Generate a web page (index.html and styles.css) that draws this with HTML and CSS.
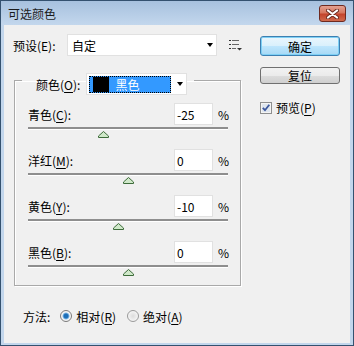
FILE: index.html
```html
<!DOCTYPE html>
<html>
<head>
<meta charset="utf-8">
<title>可选颜色</title>
<link rel="stylesheet" href="styles.css">
</head>
<body>
<div class="window">
    <div class="titlebar">
        <span class="title">可选颜色</span>
        <span class="close-btn">
            <svg width="13" height="10" viewBox="0 0 13 10">
                <path d="M2 1.5 L11 8.5 M11 1.5 L2 8.5" stroke="#6b2a20" stroke-width="4" stroke-linecap="round"/>
                <path d="M2 1.5 L11 8.5 M11 1.5 L2 8.5" stroke="#fff" stroke-width="2.2" stroke-linecap="round"/>
            </svg>
        </span>
    </div>
    <div class="client">
        <div class="main">
            <div class="preset-row">
                <span class="preset-label">预设(E):</span>
                <div class="select preset-select">
                    <span>自定</span>
                    <span class="arrow"></span>
                </div>
                <svg class="menu-icon" width="13" height="11" viewBox="0 0 13 11">
                    <rect x="0" y="0" width="2" height="1" fill="#333"/>
                    <rect x="3" y="0" width="7" height="1" fill="#666"/>
                    <rect x="0" y="4" width="2" height="1" fill="#333"/>
                    <rect x="3" y="4" width="7" height="1" fill="#666"/>
                    <rect x="0" y="8" width="2" height="1" fill="#333"/>
                    <rect x="3" y="8" width="4" height="1" fill="#666"/>
                    <path d="M8 8 L13 8 L10.5 10.5 Z" fill="#333"/>
                </svg>
            </div>

            <fieldset class="group">
                <legend class="group-legend">
                    <span>颜色(<u>O</u>):</span>
                    <div class="select color-select">
                        <span class="color-item"><span class="swatch"></span>黑色</span>
                        <span class="arrow"></span>
                    </div>
                </legend>

                <div class="slider-row">
                    <div class="field-row">
                        <span class="field-label">青色(<u>C</u>):</span>
                        <span class="num-input">-25</span>
                        <span class="unit">%</span>
                    </div>
                    <div class="slider">
                        <div class="track"></div>
                        <svg class="thumb" style="left: 70px" width="11" height="7" viewBox="0 0 11 7"><path d="M5.5 0.5 L10.5 5 L10.5 6.5 L0.5 6.5 L0.5 5 Z" fill="#cfe8c9" stroke="#3d6b3a"/></svg>
                    </div>
                </div>

                <div class="slider-row">
                    <div class="field-row">
                        <span class="field-label">洋红(<u>M</u>):</span>
                        <span class="num-input">0</span>
                        <span class="unit">%</span>
                    </div>
                    <div class="slider">
                        <div class="track"></div>
                        <svg class="thumb" style="left: 95px" width="11" height="7" viewBox="0 0 11 7"><path d="M5.5 0.5 L10.5 5 L10.5 6.5 L0.5 6.5 L0.5 5 Z" fill="#cfe8c9" stroke="#3d6b3a"/></svg>
                    </div>
                </div>

                <div class="slider-row">
                    <div class="field-row">
                        <span class="field-label">黄色(<u>Y</u>):</span>
                        <span class="num-input">-10</span>
                        <span class="unit">%</span>
                    </div>
                    <div class="slider">
                        <div class="track"></div>
                        <svg class="thumb" style="left: 85px" width="11" height="7" viewBox="0 0 11 7"><path d="M5.5 0.5 L10.5 5 L10.5 6.5 L0.5 6.5 L0.5 5 Z" fill="#cfe8c9" stroke="#3d6b3a"/></svg>
                    </div>
                </div>

                <div class="slider-row">
                    <div class="field-row">
                        <span class="field-label">黑色(<u>B</u>):</span>
                        <span class="num-input">0</span>
                        <span class="unit">%</span>
                    </div>
                    <div class="slider">
                        <div class="track"></div>
                        <svg class="thumb" style="left: 95px" width="11" height="7" viewBox="0 0 11 7"><path d="M5.5 0.5 L10.5 5 L10.5 6.5 L0.5 6.5 L0.5 5 Z" fill="#cfe8c9" stroke="#3d6b3a"/></svg>
                    </div>
                </div>
            </fieldset>

            <div class="method-row">
                <span class="method-label">方法:</span>
                <span class="radio checked"></span>
                <span class="radio-text">相对(<u>R</u>)</span>
                <span class="radio"></span>
                <span class="radio-text">绝对(<u>A</u>)</span>
            </div>
        </div>

        <div class="side">
            <div class="btn btn-default">确定</div>
            <div class="btn">复位</div>
            <div class="check-row">
                <svg class="checkbox" width="12" height="12" viewBox="0 0 12 12">
                    <rect x="0.5" y="0.5" width="11" height="11" fill="#f4f4f4" stroke="#8e8f8f"/>
                    <rect x="2" y="2" width="8" height="8" fill="#dfe6ee"/>
                    <path d="M2.8 5.8 L5 8.2 L9.3 2.8" fill="none" stroke="#3b579d" stroke-width="1.8"/>
                </svg>
                <span>预览(<u>P</u>)</span>
            </div>
        </div>
    </div>
</div>
</body>
</html>
```

FILE: styles.css
```css
* {
    box-sizing: border-box;
}

body {
    margin: 0;
    font-family: "Noto Sans CJK SC", "Liberation Sans", sans-serif;
    font-size: 12px;
    color: #000;
}

u {
    text-decoration: underline;
    text-underline-offset: 2px;
}

.window {
    width: 354px;
    height: 346px;
    border: 1px solid #34516f;
    background-color: #c2d6ec;
    display: flex;
    flex-direction: column;
}

.titlebar {
    height: 24px;
    display: flex;
    align-items: center;
    justify-content: space-between;
    padding: 0 7px 0 7px;
    background: linear-gradient(#a7c1de, #c3d7ed);
}

.title {
    font-size: 12px;
    color: #1b1b1b;
}

.close-btn {
    width: 27px;
    height: 17px;
    margin-top: 1px;
    border: 1px solid #6e2a20;
    border-radius: 3px;
    background: linear-gradient(#e3a192 0%, #d6775f 45%, #c4442c 55%, #cf6a4d 100%);
    display: flex;
    align-items: center;
    justify-content: center;
}

.client {
    flex: 1;
    margin: 0 3px 2px 3px;
    background-color: #f0f0f0;
    display: flex;
    padding: 9px 0 0 9px;
}

.main {
    width: 237px;
}

.preset-row {
    display: flex;
    align-items: center;
    height: 22px;
}

.preset-label {
    width: 54px;
}

.select {
    height: 22px;
    background-color: #fff;
    border: 1px solid #e1e1e1;
    display: flex;
    align-items: center;
    justify-content: space-between;
}

.preset-select {
    width: 150px;
    padding: 0 3px 0 4px;
}

.arrow {
    width: 0;
    height: 0;
    border-left: 3.5px solid transparent;
    border-right: 3.5px solid transparent;
    border-top: 4px solid #000;
}

.menu-icon {
    margin-left: 12px;
}

.group {
    margin: 9px 0 0 1px;
    width: 227px;
    padding: 0 12px 9px 13px;
    border: 1px solid #a9a9a9;
    box-shadow: 1px 1px 0 #fff, inset 1px 1px 0 #fff;
    min-width: 0;
}

.group-legend {
    display: flex;
    align-items: center;
    gap: 6px;
    margin-left: -6px;
    padding: 8px 7px 0 14px;
}

.color-select {
    width: 101px;
    padding: 0 3px 0 2px;
}

.color-item {
    width: 82px;
    height: 17px;
    background-color: #3399ff;
    color: #fff;
    outline: 1px dotted #000;
    outline-offset: -1px;
    display: flex;
    align-items: center;
    gap: 6px;
    padding-left: 4px;
}

.swatch {
    width: 16px;
    height: 15px;
    background-color: #000;
}

.slider-row {
    margin-top: 11px;
}

.slider-row:first-of-type {
    margin-top: 8px;
}

.field-row {
    display: flex;
    align-items: center;
    height: 22px;
}

.field-label {
    flex: 1;
}

.num-input {
    width: 39px;
    height: 22px;
    background-color: #fff;
    border: 1px solid #e1e1e1;
    padding-left: 2px;
    display: flex;
    align-items: center;
}

.unit {
    margin-left: 5px;
    width: 10px;
}

.slider {
    position: relative;
    height: 11px;
    margin-top: 2px;
}

.track {
    height: 3px;
    background-color: #8e8e8e;
    border-bottom: 1px solid #fff;
}

.thumb {
    position: absolute;
    top: 4px;
}

.method-row {
    display: flex;
    align-items: center;
    height: 16px;
    margin: 22px 0 0 10px;
}

.radio {
    width: 12px;
    height: 12px;
    border-radius: 50%;
    border: 1px solid #9a9a9a;
    background: radial-gradient(circle, #dcdcdc 0%, #f8f8f8 80%);
    margin-left: 10px;
}

.radio.checked {
    background: radial-gradient(circle, #1d6fb8 0%, #1d6fb8 28%, #7ab5e4 42%, #f4f4f4 55%, #f4f4f4 100%);
    border-color: #7b7b7b;
}

.radio + .radio-text {
    margin-left: 4px;
}

.radio-text + .radio {
    margin-left: 11px;
}

.side {
    margin-left: 10px;
    width: 80px;
}

.btn {
    height: 17px;
    margin-top: 11px;
    border: 1px solid #707070;
    border-radius: 3px;
    background: linear-gradient(#f2f2f2 0%, #ebebeb 50%, #dddddd 51%, #cfcfcf 100%);
    display: flex;
    align-items: center;
    justify-content: center;
}

.btn-default {
    height: 20px;
    margin-top: 2px;
    border-color: #3c7fb1;
    box-shadow: inset 0 0 0 1px #7ed0f5;
    background: linear-gradient(#eaf6fd 0%, #d9f0fc 50%, #bee6fd 51%, #a7d9f5 100%);
}

.check-row {
    display: flex;
    align-items: center;
    gap: 4px;
    margin-top: 15px;
}
```
